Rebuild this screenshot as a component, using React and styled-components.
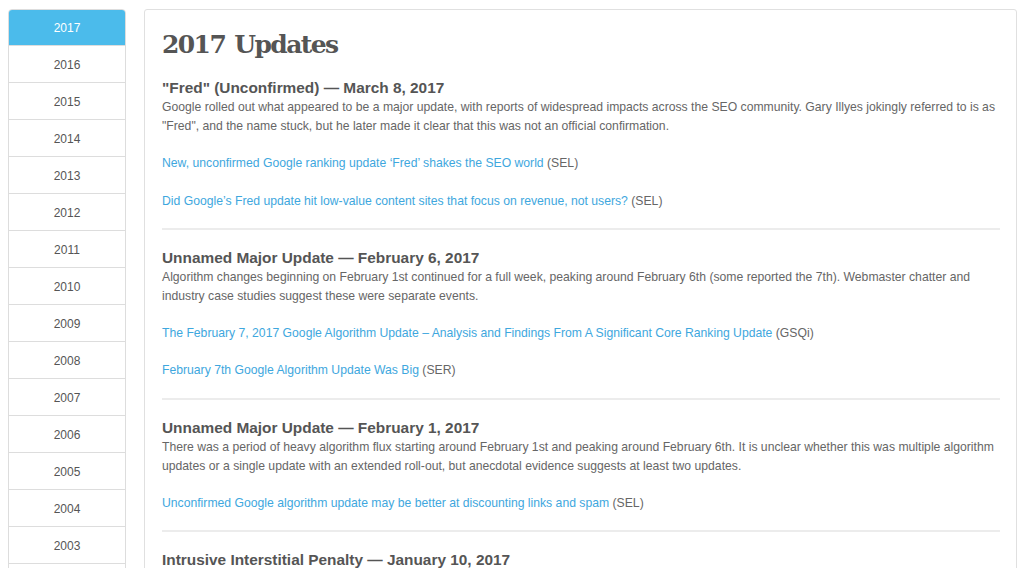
import React from "react";
import styled, { createGlobalStyle } from "styled-components";

const Global = createGlobalStyle`
  html, body { margin: 0; padding: 0; background: #fff; }
  body { font-family: "Liberation Sans", Arial, sans-serif; overflow: hidden; }
  * { box-sizing: border-box; }
`;

const Page = styled.div`
  display: flex;
  align-items: flex-start;
  gap: 18px;
  padding: 9px 7px 0 8px;
  height: 568px;
  overflow: hidden;
`;

const Sidebar = styled.nav`
  flex: 0 0 118px;
  border: 1px solid #dddddd;
  border-radius: 4px;
  overflow: hidden;
  background: #fff;
`;

const YearItem = styled.a`
  display: flex;
  align-items: center;
  justify-content: center;
  height: 37px;
  padding-top: 2px;
  border-bottom: 1px solid #dddddd;
  font-size: 12px;
  color: ${(p) => (p.$active ? "#ffffff" : "#555555")};
  background: ${(p) => (p.$active ? "#4bbbeb" : "#ffffff")};
  text-decoration: none;
  margin-top: ${(p) => (p.$active ? "-1px" : "0")};
`;

const Panel = styled.main`
  flex: 1;
  border: 1px solid #e0e0e0;
  border-radius: 3px;
  padding: 17px 16px 0 17px;
  min-height: 600px;
`;

const Title = styled.h1`
  margin: 0 0 16px;
  font-family: "DejaVu Serif", "Liberation Serif", serif;
  font-size: 25px;
  line-height: 36px;
  font-weight: bold;
  color: #555555;
  letter-spacing: -1.6px;
  word-spacing: 2px;
`;

const Entry = styled.section`
  border-bottom: ${(p) => (p.$last ? "none" : "2px solid #ececec")};
  padding-bottom: 17px;
  margin-bottom: 19px;
`;

const EntryTitle = styled.h2`
  margin: 0 0 2px;
  font-size: 15.4px;
  line-height: 17px;
  font-weight: bold;
  color: #555555;
`;

const Text = styled.p`
  margin: 0 0 18px;
  font-size: 12.2px;
  line-height: 19.2px;
  color: #666666;
  &:last-child { margin-bottom: 0; }
`;

const Link = styled.a`
  color: #3ea7de;
  text-decoration: none;
`;

const years = [
  "2017", "2016", "2015", "2014", "2013", "2012", "2011", "2010", "2009",
  "2008", "2007", "2006", "2005", "2004", "2003", "2002", "2001", "2000",
];

const entries = [
  {
    title: '"Fred" (Unconfirmed) — March 8, 2017',
    text: 'Google rolled out what appeared to be a major update, with reports of widespread impacts across the SEO community. Gary Illyes jokingly referred to is as "Fred", and the name stuck, but he later made it clear that this was not an official confirmation.',
    links: [
      ["New, unconfirmed Google ranking update ‘Fred’ shakes the SEO world", "SEL"],
      ["Did Google’s Fred update hit low-value content sites that focus on revenue, not users?", "SEL"],
    ],
  },
  {
    title: "Unnamed Major Update — February 6, 2017",
    text: "Algorithm changes beginning on February 1st continued for a full week, peaking around February 6th (some reported the 7th). Webmaster chatter and industry case studies suggest these were separate events.",
    links: [
      ["The February 7, 2017 Google Algorithm Update – Analysis and Findings From A Significant Core Ranking Update", "GSQi"],
      ["February 7th Google Algorithm Update Was Big", "SER"],
    ],
  },
  {
    title: "Unnamed Major Update — February 1, 2017",
    text: "There was a period of heavy algorithm flux starting around February 1st and peaking around February 6th. It is unclear whether this was multiple algorithm updates or a single update with an extended roll-out, but anecdotal evidence suggests at least two updates.",
    links: [
      ["Unconfirmed Google algorithm update may be better at discounting links and spam", "SEL"],
    ],
  },
  {
    title: "Intrusive Interstitial Penalty — January 10, 2017",
    text: "Google announced a penalty for aggressive interstitials and pop-ups that might damage the mobile user experience.",
    links: [],
  },
];

export default function App() {
  return (
    <>
      <Global />
      <Page>
        <Sidebar>
          {years.map((y, i) => (
            <YearItem key={y} href="#" $active={i === 0}>
              {y}
            </YearItem>
          ))}
        </Sidebar>
        <Panel>
          <Title>2017 Updates</Title>
          {entries.map((e, i) => (
            <Entry key={e.title} $last={i === entries.length - 1}>
              <EntryTitle>{e.title}</EntryTitle>
              <Text>{e.text}</Text>
              {e.links.map(([label, src]) => (
                <Text key={label}>
                  <Link href="#">{label}</Link> ({src})
                </Text>
              ))}
            </Entry>
          ))}
        </Panel>
      </Page>
    </>
  );
}
